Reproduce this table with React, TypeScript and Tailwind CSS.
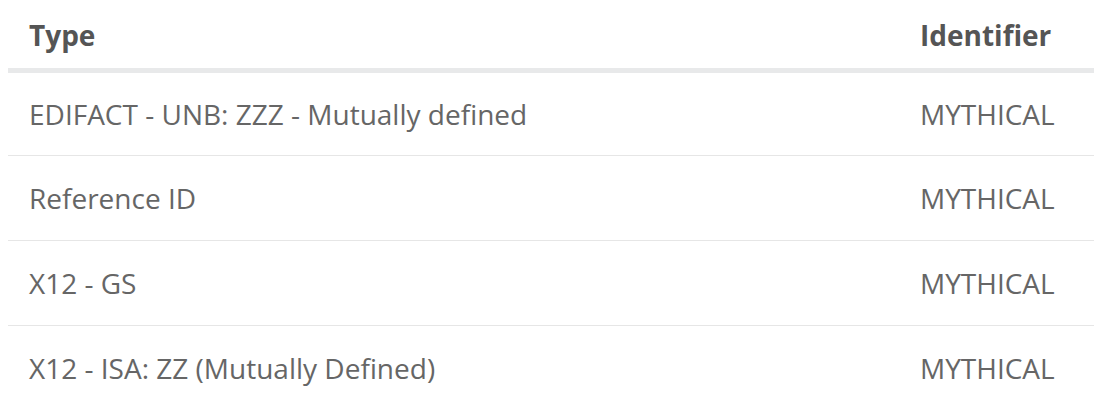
const rows = [
  { type: 'EDIFACT - UNB: ZZZ - Mutually defined', id: 'MYTHICAL' },
  { type: 'Reference ID', id: 'MYTHICAL' },
  { type: 'X12 - GS', id: 'MYTHICAL' },
  { type: 'X12 - ISA: ZZ (Mutually Defined)', id: 'MYTHICAL' },
];

export default function App() {
  return (
    <div className="bg-white w-[1094px] h-[412px] overflow-hidden pl-[8px] font-['Open_Sans',sans-serif]">
      <table className="w-[1100px] border-collapse text-left">
        <thead>
          <tr className="border-b-[5px] border-[#e8e9ea]">
            <th className="h-[70px] pl-[21px] pt-[2px] text-[28px] font-bold text-[#555555]">Type</th>
            <th className="w-[200px] pl-[12px] pt-[2px] text-[28px] font-bold text-[#555555]">Identifier</th>
          </tr>
        </thead>
        <tbody>
          {rows.map((r, i) => (
            <tr key={i} className={i < rows.length - 1 ? 'border-b border-[#e6e6e6]' : ''}>
              <td className="h-[85px] pl-[21px] text-[28px] text-[#666666]">{r.type}</td>
              <td className="pl-[12px] text-[28px] text-[#666666]">{r.id}</td>
            </tr>
          ))}
        </tbody>
      </table>
    </div>
  );
}
